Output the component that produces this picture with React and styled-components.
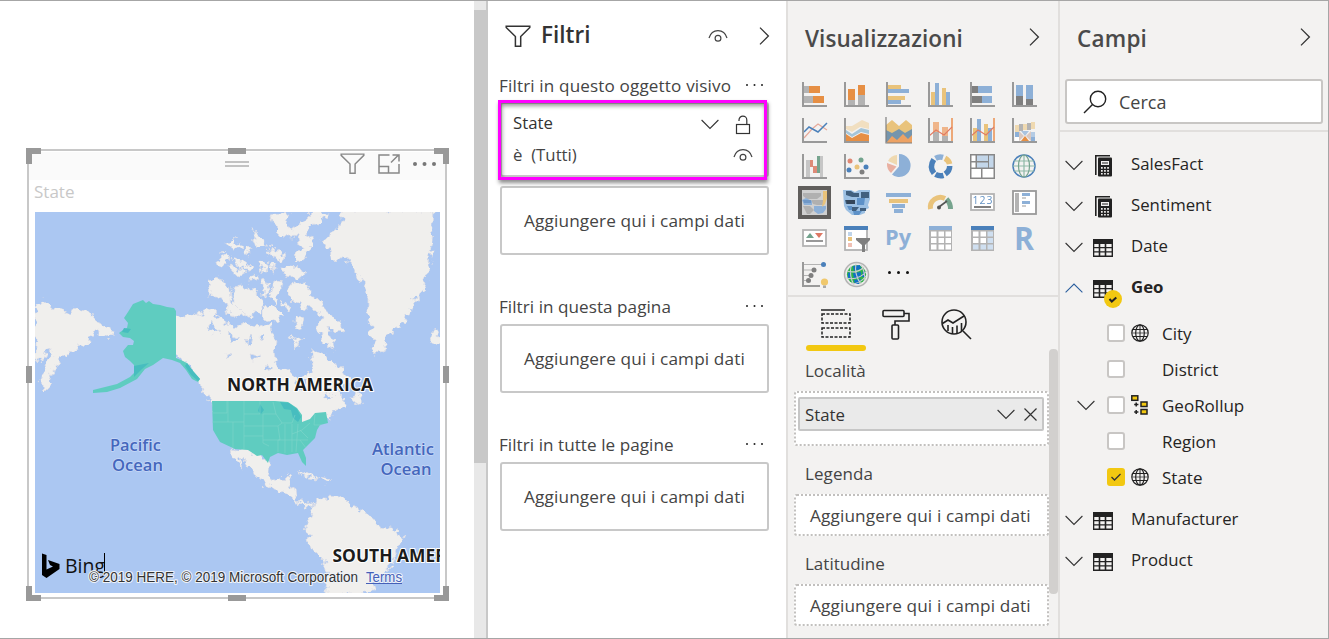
import React from 'react';
import styled, { createGlobalStyle } from 'styled-components';

const Global = createGlobalStyle`
  * { box-sizing: border-box; }
  body { margin: 0; background: #fff; font-family: "Open Sans", "Noto Sans", sans-serif; font-size: 16.8px; color: #333; }
  svg { display: block; flex: none; }
`;

const Shell = styled.div`
  display: flex;
  width: 1329px;
  height: 639px;
  border: 1px solid #a6a6a6;
  border-left: 0;
  overflow: hidden;
`;

const Label = styled.span`
  display: block;
  white-space: nowrap;
  line-height: 24px;
  font-size: ${p => p.$size || 16.8}px;
  font-weight: ${p => p.$weight || 400};
  letter-spacing: ${p => p.$track || 0}px;
  color: ${p => p.$color || '#444'};
`;

/* ---------- report canvas ---------- */
const Canvas = styled.main`
  width: 474px;
  padding: 147px 0 0 26px;
`;
const Visual = styled.section`
  position: relative;
  width: 423px;
  height: 453px;
  padding: 4px 4px 0 3px;
`;
const Outline = styled.div`
  position: absolute;
  inset: 1px 2px 2px 1px;
  border: 2px solid #c8c8c8;
  pointer-events: none;
`;
const Handle = styled.i`
  position: absolute;
  background: #999;
  ${p => p.$css}
`;
const VisualHeader = styled.header`
  display: flex;
  align-items: center;
  justify-content: flex-end;
  gap: 13px;
  height: 28px;
  padding: 0 9px 4px 0;
  background: #fafafa;
`;
const Grip = styled.div`
  width: 24px;
  height: 6px;
  margin: 0 78px 0 0;
  border: solid #c2c2c2;
  border-width: 2px 0;
`;
const VisualTitle = styled.div`
  padding: 0 0 8px 5px;
  height: 32px;
`;
const MapBox = styled.div`
  margin-left: 6px;
  width: 405px;
  height: 381px;
`;
const CanvasScroll = styled.div`
  width: 14px;
  padding-top: 9px;
  background: #e8e8e8;
  border-right: 2px solid #c8c8c8;
`;
const CanvasThumb = styled.div`
  height: 453px;
  background: #c8c8c8;
`;

/* ---------- filters ---------- */
const FilterPane = styled.aside`
  width: 298px;
  padding: 0 17px 0 12px;
`;
const FilterHead = styled.header`
  display: flex;
  align-items: center;
  height: 70px;
  margin-right: -1px;
  padding: 0 0 0 5px;
`;
const FilterTitle = styled.div`
  flex: 1;
  padding: 0 0 3px 10px;
`;
const FilterSection = styled.section`
  margin-bottom: 37px;
`;
const SectionHead = styled.div`
  display: flex;
  align-items: center;
  justify-content: space-between;
  height: 30px;
  margin: 0 0 ${p => p.$gap}px -1px;
  padding-right: 6px;
  & > svg { margin-bottom: 3px; }
`;
const DropBox = styled.div`
  display: flex;
  align-items: center;
  justify-content: center;
  height: 69px;
  border: 2px solid #c8c8c8;
  border-radius: 3px;
`;
const FilterCard = styled.div`
  position: relative;
  height: 75px;
  margin-bottom: 9px;
  padding: 7px 16px 0 11px;
  border: 2px solid #c8c8c8;
  border-radius: 3px;
`;
const CardRow = styled.div`
  display: flex;
  align-items: center;
  height: 34px;
  margin-right: -2px;
  & > span { flex: 1; }
`;
const CardTop = styled(CardRow)`
  height: 30px;
  margin: -3px 0 0;
  gap: 16px;
  & > svg { margin-top: 3px; }
`;
const Highlight = styled.div`
  position: absolute;
  left: -4px;
  top: -4px;
  width: 269px;
  height: 80px;
  border: 3px solid #ff00ff;
  box-shadow: 1px 3px 4px rgba(0, 0, 0, .45), inset 1px 3px 4px rgba(0, 0, 0, .4);
  pointer-events: none;
`;

/* ---------- visualizations ---------- */
const VizPane = styled.aside`
  width: 272px;
  background: #f3f2f1;
  border-left: 2px solid #e1dfdd;
`;
const PaneHead = styled.header`
  display: flex;
  align-items: center;
  justify-content: space-between;
  height: 72px;
  padding: 0 ${p => p.$right || 18}px 0 17px;
  & > span { padding-top: 3px; }
`;
const Gallery = styled.div`
  display: grid;
  grid-template-columns: repeat(6, 42px);
  grid-auto-rows: 36px;
  height: 224px;
  padding: 3px 0 0 6px;
  border-bottom: 2px solid #e1dfdd;
`;
const Cell = styled.div`
  display: flex;
  align-items: center;
  justify-content: center;
  width: 33px;
  height: 33px;
  margin: 1.5px 4px;
  ${p => p.$on && 'border: 4px solid #605e5c; background: #d0d0d0;'}
`;
const MoreCell = styled(Cell)`
  padding-bottom: 4px;
`;
const VizTabs = styled.div`
  display: flex;
  height: 54px;
  padding-left: 18px;
`;
const VizTab = styled.div`
  display: flex;
  justify-content: center;
  width: 60px;
  padding-top: 12px;
  position: relative;
  &::after {
    content: '';
    position: absolute;
    left: 0; right: 0; bottom: 0;
    height: 6px;
    border-radius: 3px;
    background: ${p => (p.$on ? '#f2c811' : 'transparent')};
  }
`;
const WellScroll = styled.div`
  display: flex;
  height: 286px;
`;
const Wells = styled.div`
  width: 261px;
  padding-left: 6px;
`;
const WellName = styled.div`
  height: ${p => p.$h}px;
  padding: ${p => p.$top}px 0 0 11px;
`;
const Well = styled.div`
  width: 255px;
  height: ${p => p.$h}px;
  padding: ${p => (p.$filled ? '4px 3px 4px 2px' : '8px 14px')};
  border: 2px dotted #c2c0be;
  border-radius: 3px;
  background: #fff;
`;
const Chip = styled.div`
  display: flex;
  align-items: center;
  height: 34px;
  padding: 1px 5px 0;
  gap: 9px;
  border: 2px solid #c6c6c6;
  border-radius: 2px;
  background: #eaeaea;
  & > span { flex: 1; }
`;
const WellThumb = styled.div`
  width: 9px;
  height: 245px;
  margin-top: -2px;
  border-radius: 4px;
  background: #d2d0ce;
`;

/* ---------- fields ---------- */
const FieldsPane = styled.aside`
  width: 270px;
  background: #f3f2f1;
  border-left: 2px solid #e1dfdd;
`;
const SearchArea = styled.div`
  height: 59px;
  padding: 6px 5px 0;
  border-bottom: 2px solid #e1dfdd;
`;
const SearchBox = styled.div`
  display: flex;
  align-items: center;
  gap: 12px;
  height: 45px;
  padding: 0 0 0 16px;
  border: 2px solid #c8c6c4;
  border-radius: 3px;
  background: #fff;
`;
const Tree = styled.div`
  padding: 11px 0 0 5px;
`;
const TableRow = styled.div`
  display: flex;
  align-items: center;
  height: 41px;
  & > svg { margin-top: 3px; }
`;
const IconSlot = styled.div`
  position: relative;
  width: 38px;
  margin: 4px 0 0 10px;
`;
const Badge = styled.div`
  position: absolute;
  left: 11px;
  top: 10px;
`;
const Children = styled.div`
  padding: 9px 0 2px;
`;
const FieldRow = styled.div`
  display: flex;
  align-items: center;
  height: 36px;
  padding-left: 12px;
`;
const Slot = styled.div`
  width: ${p => p.$w}px;
  & > svg { margin-bottom: 2px; }
`;
const Check = styled.div`
  width: 18px;
  height: 18px;
  margin-bottom: 2px;
  border: 2px solid ${p => (p.$on ? '#f2c811' : '#c8c6c4')};
  border-radius: 3px;
  background: ${p => (p.$on ? '#f2c811' : '#fff')};
`;

/* ---------- small glyphs ---------- */
const Chevron = ({ dir = 'down', w = 18, color = '#333' }) => {
  const d = { down: 'M.6 1 9 9.4 17.4 1', up: 'M.6 9.4 9 1l8.400 8.400', right: 'M1 .6 9.400 9 1 17.400' }[dir];
  const side = dir === 'right';
  return (
    <svg width={side ? 11 : w} height={side ? 18 : 11} viewBox={side ? '0 0 11 18' : '0 0 18 11'} fill="none" stroke={color} strokeWidth={side ? 1.3 : 1.1}><path d={d} /></svg>
  );
};
const Eye = () => (
  <svg width="20" height="14" viewBox="0 0 20 14" fill="none" stroke="#444" strokeWidth="1.2">
    <path d="M1 9C2.500 4 6 1.600 10 1.600S17.500 4 19 9" /><circle cx="10" cy="9.200" r="2.900" />
  </svg>
);
const Lock = () => (
  <svg width="16" height="20" viewBox="0 0 16 20" fill="none" stroke="#333" strokeWidth="1.200">
    <rect x="1.500" y="9.500" width="13" height="9" /><path d="M4 6V5a3.900 3.900 0 0 1 7.800 0v4.500" />
  </svg>
);
const Funnel = ({ color = '#333', w = 26, sw = 1.5 }) => (
  <svg width={w} height={w * 24 / 26} viewBox="0 0 26 24" fill="none" stroke={color} strokeWidth={sw}>
    <path d="M1.200 2.200h23.600v1.300L15.700 12.500v9.700h-5.300v-9.700L1.200 3.500z" />
  </svg>
);
const Dots = ({ color = '#333', r = 1, gap = 7 }) => (
  <svg width={gap * 2 + r * 2} height={r * 2} fill={color}>
    {[0, 1, 2].map(i => <circle key={i} cx={r + i * gap} cy={r} r={r} />)}
  </svg>
);
const Globe = () => (
  <svg width="18" height="18" viewBox="0 0 18 18" fill="none" stroke="#222" strokeWidth="1.200">
    <circle cx="9" cy="9" r="8.200" /><ellipse cx="9" cy="9" rx="4.300" ry="8.200" /><path d="M9 1v16M2 5.500h14M2 12.500h14" strokeWidth="1" /><path d="M1 9h16" strokeWidth=".7" />
  </svg>
);
const TableIcon = () => (
  <svg width="20" height="18" viewBox="0 0 20 18">
    <path fill="#222" d="M0 0h20v18H0z" />
    <path fill="#f3f2f1" d="M1.300 5h4.400v3H1.300zM7.300 5h4.400v3H7.300zM13.300 5h5.300v3h-5.300zM1.300 9.300h4.400v3H1.300zM7.300 9.300h4.400v3H7.300zM13.300 9.300h5.300v3h-5.300zM1.300 13.600h4.400v3H1.300zM7.300 13.600h4.400v3H7.300zM13.300 13.600h5.300v3h-5.300z" />
  </svg>
);
const CalcIcon = () => (
  <svg width="20" height="22" viewBox="0 0 20 22">
    <path d="M17 .8H2.800V20" fill="none" stroke="#222" strokeWidth="1.600" />
    <path fill="#222" d="M6 2.500h12q1 0 1 1v17q0 1-1 1H6q-1 0-1-1v-17q0-1 1-1z" />
    <path fill="#f3f2f1" d="M8 6h8v4H8zM8 12h1.700v1.700H8zM11.100 12h1.700v1.700h-1.700zM14.200 12h1.700v1.700h-1.700zM8 15h1.700v1.700H8zM11.100 15h1.700v1.700h-1.700zM14.200 15h1.700v1.700h-1.700zM8 18h1.700v1.500H8zM11.100 18h1.700v1.500h-1.700zM14.200 18h1.700v1.500h-1.700z" />
    <path fill="#222" d="M9 7.500h6v1H9z" />
  </svg>
);
const Hierarchy = () => (
  <svg width="18" height="20" viewBox="0 0 18 20" fill="#f2c811" stroke="#222" strokeWidth="1.500">
    <rect x=".8" y=".8" width="6" height="4.500" /><rect x="10" y="7" width="6" height="4.500" /><rect x="10" y="14.500" width="6" height="4.500" />
    <path d="M5.200 7.500v4M3.200 9.500h4.200M5.200 15v4M3.200 17h4.200" fill="none" />
  </svg>
);
const Tick = () => <svg width="14" height="14" viewBox="0 0 14 14" fill="none" stroke="#333" strokeWidth="1.300"><path d="m2.500 7 3 3 6-6" /></svg>;

/* ---------- visual gallery icons, 25 x 25 ---------- */
const O = '#e68f44', B = '#8db0d7', DB = '#4a80ba', Y = '#e9c37b', G = '#b3b3b3', K = '#7f7f7f', AX = '#999';
const R = (x, y, w, h, f) => <rect key={`${x}-${y}-${f}`} x={x} y={y} width={w} height={h} fill={f} />;
const Axis = () => <path d="M1 0v24h24" fill="none" stroke={AX} strokeWidth="2" />;
const Line = ({ d, c, w = 1.2, f = 'none' }) => <path d={d} fill={f} stroke={c} strokeWidth={w} />;

const gallery = [
  <>{R(2, 4, 5, 7, G)}{R(7, 4, 11, 7, O)}{R(2, 14, 9, 7, G)}{R(11, 14, 11, 7, O)}<Axis /></>,
  <>{R(4, 7, 7, 11, O)}{R(4, 18, 7, 5, G)}{R(14, 3, 7, 10, O)}{R(14, 13, 7, 10, G)}<Axis /></>,
  <>{R(2, 3, 13, 4, Y)}{R(2, 7, 21, 4, B)}{R(2, 14, 17, 4, Y)}{R(2, 18, 13, 4, B)}<Axis /></>,
  <>{R(3, 10, 4, 13, Y)}{R(7, 1, 4, 22, B)}{R(14, 6, 4, 17, Y)}{R(18, 10, 4, 13, B)}<Axis /></>,
  <>{R(2, 4, 6, 7, K)}{R(8, 4, 14, 7, B)}{R(2, 14, 10, 7, K)}{R(12, 14, 10, 7, B)}<Axis /></>,
  <>{R(4, 3, 7, 11, B)}{R(4, 14, 7, 9, K)}{R(14, 3, 7, 14, B)}{R(14, 17, 7, 6, K)}<Axis /></>,
  <><Line d="m2 20 8-9 6-5 9 6" c="#e6a99a" /><Line d="m2 14 5-5 9 5 9-9" c={DB} w={1.500} /><Axis /></>,
  <><path d="m2 8 6 0L18 2l7 3v6l-9-2-8 5-6-3z" fill="#f1dfc0" /><path d="m2 12 6 4 9-6 8 2v4l-8-2-9 5-6-4z" fill="#a5c5d8" /><path d="m2 16 6 4 9-5 8 2v6H2z" fill={O} /><Axis /></>,
  <><path d="m0 7 6-5 7 6 7-6 6 5v10H0z" fill={Y} /><path d="m0 12 6 3 7-4 6 4 7-4v13H0z" fill="#7495ad" /><path d="m1 24 5-6 5 4 6-6 5 5 4-4v8H1z" fill="#eda263" /><path d="M0-1v26h26" fill="none" stroke={K} strokeWidth="1.200" /></>,
  <>{R(5, 4, 6, 10, '#efb58a')}{R(5, 14, 6, 9, G)}{R(14, 9, 6, 9, '#efb58a')}{R(14, 18, 6, 5, G)}{R(23, 0, 2, 23, '#eda878')}<Line d="m1 18 7-6 8 5 8-8" c="#e27b63" w={1.100} /><Axis /></>,
  <>{R(3, 10, 4, 13, Y)}{R(7, 1, 4, 22, B)}{R(14, 6, 4, 17, Y)}{R(18, 10, 4, 13, B)}{R(23, 0, 2, 23, '#eda878')}<Line d="m1 18 7-6 8 5 8-8" c="#e27b63" w={1.100} /><Axis /></>,
  <>{R(3, 7, 4, 7, '#efd9b0')}{R(7, 6, 4, 7, G)}{R(11, 6, 4, 6, '#efd9b0')}{R(15, 5, 4, 7, G)}{R(19, 4, 4, 7, '#efd9b0')}{R(3, 14, 4, 5, B)}{R(19, 14, 4, 5, '#b4cbe4')}<path d="m7 13 5 5-5 5zM19 13l-5 5 5 5z" fill="#d9c8c0" /><path d="M9 13h8l-4 5z" fill="#a9c3df" /><path d="m9 23 4-5 4 5z" fill={O} />{R(3, 19, 4, 4, '#fff')}{R(19, 19, 4, 4, B)}<Axis /></>,
  <>{R(4, 6, 4, 17, '#c6c6c6')}{R(8, 6, 3, 7, '#dd8b78')}{R(11, 12, 4, 7, '#dd8b78')}{R(15, 2, 3, 17, '#76a48e')}{R(18, 2, 3, 21, '#c6c6c6')}<Axis /></>,
  <><circle cx="6" cy="7" r="2.500" fill="#e08873" /><circle cx="17" cy="6" r="2.500" fill="#72a38d" /><circle cx="5" cy="16" r="2.500" fill={DB} /><circle cx="13" cy="13" r="2.500" fill={Y} /><circle cx="22" cy="13" r="2.500" fill={DB} /><circle cx="18" cy="18" r="2.500" fill={K} /><Axis /></>,
  <><path d="M13 0a11.500 11.500 0 1 1-7 20.500l7-8z" fill={B} /><path d="M11 1v10L2 7A11 11 0 0 1 11 1z" fill="#efd9b0" /><path d="m1 9 9.500 3.500L5 19A12 12 0 0 1 1 9z" fill="#e9b0a1" /></>,
  <g fill="none" strokeWidth="5.500"><path d="M7.500 4.300a9.500 9.500 0 0 1 7.500-.9" stroke={B} /><path d="M17 4.300q3.800 2 4.600 5.700" stroke={Y} /><path d="M21.700 12q0 5-4.500 8" stroke={DB} /><path d="M15.500 21.300q-4 1.200-8-1" stroke={DB} /><path d="M6 19.300Q1 13 5.800 5.500" stroke={DB} /></g>,
  <>{R(0, 0, 25, 25, '#888')}{R(1.500, 1.500, 4, 5.500, '#fff')}{R(7, 1.500, 11, 5.500, '#c3d6e9')}{R(19, 1.500, 4.500, 12, '#c3d6e9')}{R(1.500, 8.500, 4, 5, '#fff')}{R(7, 8.500, 11, 5, '#c3d6e9')}{R(1.500, 15, 9.500, 8.500, '#fff')}{R(12.500, 15, 11, 8.500, '#fff')}</>,
  <g fill="none" strokeWidth="1.200"><circle cx="12" cy="12" r="11" stroke={DB} strokeWidth="1.500" /><path d="M12 1v22M2 7h20M1 12h22M2 17h20" stroke="#8fb9a7" /><ellipse cx="12" cy="12" rx="5.500" ry="11" stroke="#76a48e" /></g>,
  <>{R(0, 0, 25, 25, '#d0d0d0')}<path d="M1 3h18v3l-4 3H5L1 6zM9 10h12v5h-6l-4-1zM1 16h7l4 4-4 4H5z" fill="#b0b0b0" /><path d="m0 10 4-2 6 3v4H2zM12 16h12v3l-3 4-5 1-4-3z" fill={B} /><path d="M1 10h8v3H2z" fill="#6f97c6" /><path d="M21 1h4v7l-2 6-3 3 1-6z" fill={Y} /></>,
  <><path d="M-1 0h8l4 2 4-2h11v9l-2 6 1 3-4 2v3l-5 2H8l-6-5-2-4z" fill="#9cc0e3" /><path d="M2 1h5l3 2h5v4H8L2 5zM17 2h8v6h-5l-3 2zM1 10h10v4H2zM16 18h6v3h-6zM8 17h7l-3 4H8z" fill="#41607f" /><path d="M2 10h9v4H3z" fill="#34465a" /><path d="M13 8h8l-1 7h-7zM3 16h5v4H5zM9 21h9l-3 4H10z" fill="#5d91c8" /></>,
  <>{R(0, 3, 25, 4, B)}{R(3, 9, 19, 4, Y)}{R(6, 14, 13, 4, B)}{R(8, 19, 9, 4, B)}</>,
  <g fill="none" strokeWidth="5"><path d="M2.500 19A10 10 0 0 1 17 8.500" stroke={Y} /><path d="M18.500 9q4 4 4 10" stroke="#76a48e" /><path d="M11 17 19 11" stroke="#555" strokeWidth="1.600" /><circle cx="11" cy="17.500" r="1" stroke="#555" strokeWidth="2" /></g>,
  <><rect x="1" y="4" width="23" height="16" fill="#fff" stroke={G} strokeWidth="1.800" /><text x="2.500" y="13.500" fontSize="10.500" textLength="20" fill={DB} opacity=".85">123</text>{R(4, 16, 17, 2, K)}</>,
  <><rect x="1" y="1" width="23" height="23" fill="#fff" stroke={AX} strokeWidth="1.800" />{R(3, 3, 4, 19, G)}{R(10, 3, 8, 3, B)}{R(10, 7, 4, 2, '#ccc')}{R(10, 11, 8, 3, B)}{R(10, 15, 4, 2, '#ccc')}</>,
  <><rect x="1" y="4" width="23" height="16" fill="#fff" stroke={G} strokeWidth="1.800" /><path d="m4 12 4-5 4 5z" fill="#72a38d" /><path d="m13 7 8 0-4 5z" fill="#dd7864" />{R(4, 14, 17, 2, AX)}</>,
  <><rect x="1" y="1" width="22" height="23" fill="#fff" stroke={G} strokeWidth="1.800" />{R(0, 0, 24, 4, DB)}{R(4, 6, 4, 4, '#bfd4ea')}{R(4, 11, 4, 4, Y)}{R(4, 17, 4, 4, '#f0c0b4')}<path d="M12 12h14v2l-5 5v7h-3v-7l-6-5z" fill={K} /></>,
  <text x="-1" y="18.500" fontSize="22" fontWeight="700" textLength="26" lengthAdjust="spacingAndGlyphs" fill={B}>Py</text>,
  <>{R(1, 0, 23, 25, G)}{R(1, 0, 23, 4, B)}{[3, 10.500, 17.500].map(x => [5.500, 12, 18.500].map(y => R(x, y, 5.500, 5, '#fff')))}</>,
  <>{R(1, 0, 23, 25, G)}{R(1, 0, 23, 4, DB)}{[3, 10.500, 17.500].map((x, i) => [5.500, 12, 18.500].map((y, j) => R(x, y, 5.500, 5, i === 2 || j === 2 ? '#cfdff0' : '#fff')))}</>,
  <text x="2" y="24" fontSize="33" fontWeight="700" textLength="20" lengthAdjust="spacingAndGlyphs" fill={B}>R</text>,
  <><path d="M2 2.500h19M2 8h10M2 13.500h7M2 18.500h5" stroke={G} strokeWidth="1.200" /><circle cx="21.500" cy="2.500" r="2.500" fill={DB} /><circle cx="12" cy="8" r="2.500" fill={K} /><circle cx="9" cy="13.500" r="2.500" fill={K} /><circle cx="6.500" cy="18.500" r="2.500" fill={K} /><path d="M1 0v24h17" fill="none" stroke={AX} strokeWidth="2" /><circle cx="22.500" cy="20" r="3.600" fill="#f0c86c" />{R(21, 23.500, 3, 2.500, '#aaa')}</>,
  <><circle cx="12.500" cy="12.500" r="12" fill="#ecebea" stroke={G} strokeWidth="1.500" /><circle cx="12.500" cy="12.500" r="9.600" fill="#2db34a" /><path d="M9 4l7-1 1 4-7 2zM9 11l8-1v5l-7 2zM4 11l3-1v6l-3 1zM10 18l7-1-2 5h-4zM19 8l2 2v5h-3z" fill="#1070c4" /><g fill="none" stroke="#cfcfcf" strokeWidth="1.100"><path d="M3 9q10 3 17-4M2 16q12 3 21-7M7 22q9 0 15-8M7 4q-2 10 3 19M12 1q-2 12 5 21M17 2q4 8 4 17" /></g></>,
];
const Gal = ({ children }) => <svg width="25" height="25" viewBox="0 0 25 25" overflow="visible">{children}</svg>;

/* ---------- map ---------- */
const land = [
  '35,304 45,302 50,305 53,309 62,311 70,314 73,309 82,311 90,313 95,320 104,326 113,331 110,338 104,336 98,331 95,333 89,338 88,344 76,349 65,357 58,360 54,372 48,386 42,392 40,382 42,372 50,358 52,350 47,352 42,358 35,363',
  '160,317 188,317 200,314 210,310 216,316 228,324 238,326 246,322 256,328 267,324 272,331 275,340 274,350 275,360 281,368 291,372 297,382 302,392 306,390 303,378 310,372 312,362 310,351 318,350 327,356 334,364 340,368 345,374 352,380 344,386 338,392 343,397 346,407 339,411 331,411 332,417 327,416 320,420 305,425 280,430 216,410 205,396 199,382 191,368 176,356 160,350',
  '230,447 248,449 257,455 262,454 269,461 268,472 272,481 281,482 288,475 291,477 287,484 296,490 298,500 305,503 314,501 313,506 303,506 292,496 281,491 266,485 257,477 250,467 241,455 239,457 243,466 237,462 231,453',
  '315,502 325,497 342,498 352,505 367,513 372,522 382,527 398,530 402,536 398,546 395,556 391,568 382,576 374,584 368,594 326,594 327,570 323,560 315,552 305,532 307,525 311,517',
  '342,210 342,222 337,230 323,240 330,250 332,259 345,260 355,268 363,283 368,297 368,310 370,327 374,352 383,353 388,333 405,323 412,303 423,290 428,273 432,240 434,210',
  '429,333 438,331 440,341 433,343',
  '212,278 223,280 230,290 232,304 244,308 250,314 240,318 228,314 226,302 217,296 210,296',
  '232,288 248,286 262,298 262,314 244,314 234,304', '217,262 225,252 232,258 224,264 218,266', '228,244 236,236 240,248 232,250', '230,264 238,270 246,272 238,277 231,271',
  '271,214 290,212 286,226 292,230 304,220 312,212 328,212 322,222 310,226 308,236 314,240 304,250 308,258 300,262 292,256 300,248 298,238 284,236 274,226',
  '252,230 260,236 266,248 258,246', '268,246 278,252 288,256 280,260 268,254', '258,260 268,262 266,270 259,268', '280,266 300,268 306,272 302,278 286,276', '234,258 246,262 252,268 240,270',
  '262,282 270,284 268,296 262,292', '274,280 282,282 280,294 274,306 271,296',
  '246,246 251,250 248,256 243,252', '250,276 258,274 256,281 249,281', '270,268 277,264 275,272', '264,306 276,308 284,316 276,322 264,318', '282,302 290,306 288,312',
  '288,284 304,282 312,296 322,302 326,312 338,320 344,330 336,332 328,324 332,340 336,350 328,346 320,338 318,328 322,318 314,308 302,306 294,302 288,296',
  '294,316 304,320 301,330 294,326', '290,336 302,340 298,346', '350,397 358,394 363,402 355,405', '297,471 309,473 317,478 308,477', '320,478 331,480 325,483',
];
const us = '212,401 275,401 288,402 297,408 302,415 302,422 310,419 315,413 326,412 328,423 320,425 317,430 315,438 303,450 306,458 306,466 302,462 298,453 287,455 278,453 270,457 268,463 262,455 257,456 248,450 235,449 220,442 213,430';
const alaska = '124,318 128,312 133,304 143,300 146,303 149,301 153,304 160,305 167,307 174,308 176,311 176,358 181,360 187,363 193,371 200,379 198,382 192,379 186,370 180,363 172,360 163,358 153,365 145,369 137,379 120,388 107,392 93,393 93,390 117,384 130,377 134,373 134,365 130,361 125,357 123,351 128,345 133,345 134,341 130,338 123,337 119,333 123,330 127,328 128,323';

const WorldMap = () => (
  <svg width="405" height="381" viewBox="35 212 405 381">
    <defs>
      <filter id="coast" x="-10%" y="-10%" width="120%" height="120%">
        <feTurbulence type="fractalNoise" baseFrequency=".13" numOctaves="3" seed="4" result="n" />
        <feDisplacementMap in="SourceGraphic" in2="n" scale="13" xChannelSelector="R" yChannelSelector="G" />
      </filter>
    </defs>
    <path fill="#abc7f2" d="M35 212h405v381H35z" />
    <g filter="url(#coast)" fill="#f0efed" stroke="#dcdde6" strokeWidth=".8">{land.map(p => <polygon key={p} points={p} />)}
      <g fill="#abc7f2"><path d="M212 324l8 4-6 5-6-4zM229 334l10 5-7 4zM248 336l5 7-6 3zM262 332l4 6-6 2zM224 352l8 2-5 3zM252 354l9 3-8 3zM266 364l6 5-7 2zM325 392l9 3-8 4z" /></g>
    </g>
    <polygon points={alaska} fill="#5fccc0" />
    <polygon points={us} fill="#5fccc0" />
    <path d="M280 402l9 1 8 6 4 8-3 5-5-4-2-8-7-1zM124 328l7 1-3 4-6-1zM134 366l15-3-7 6-8 8zM187 363l6 8 7 8-2 2-7-6-6-9zM260 404l4 6-3 4-3-3z" fill="#47bdbf" />
    <g fill="none" stroke="#84d6cc" strokeWidth=".7">
      <path d="M228 401v21M212 422h32M244 401v48M212 413h15l0-12M260 401v13h-16M244 426h34M263 414v22h-19M233 422v27M273 402l3 12h-13M276 414l6 9-4 3 2 14h-17M282 423h10l3-8M285 424v29M292 424v28M298 424l-2 28M278 440h30M292 434l10-4 8-7M300 440l6 8M308 438l-8-8M263 436v7l6 3M278 440v12M315 414l-1 11h7" opacity=".75" />
    </g>
    <g fontWeight="700" fontSize="17" fill="#1b1b1b" stroke="#fff" strokeWidth="2" paintOrder="stroke" strokeLinejoin="round">
      <text x="227" y="391" textLength="146" lengthAdjust="spacingAndGlyphs">NORTH AMERICA</text>
      <text x="332.500" y="562" textLength="143" lengthAdjust="spacingAndGlyphs">SOUTH AMERICA</text>
    </g>
    <g fontSize="17" fontWeight="600" fill="#4467bd" stroke="#c9d9f6" strokeWidth="1.500" paintOrder="stroke" strokeLinejoin="round">
      <text x="110" y="451" textLength="51" lengthAdjust="spacingAndGlyphs">Pacific</text>
      <text x="112" y="471" textLength="51" lengthAdjust="spacingAndGlyphs">Ocean</text>
      <text x="372" y="455" textLength="62" lengthAdjust="spacingAndGlyphs">Atlantic</text>
      <text x="380.500" y="475" textLength="51" lengthAdjust="spacingAndGlyphs">Ocean</text>
    </g>
    <path d="M42 553.500l4.500 1.500v14.500l6.500-3-3-1.500-2-5 11.500 4v5L46.500 578 42 575z" fill="#000" />
    <text x="65" y="573" fontSize="20" textLength="40" lengthAdjust="spacingAndGlyphs" fill="#111">Bing</text>
    <path d="M104.500 553v22" stroke="#000" />
    <g fontFamily="Liberation Sans, sans-serif" fontSize="14" stroke="#eef2f8" strokeWidth="2.200" paintOrder="stroke" strokeLinejoin="round">
      <text x="89" y="582" textLength="269" lengthAdjust="spacingAndGlyphs" fill="#333">© 2019 HERE, © 2019 Microsoft Corporation</text>
      <text x="366" y="582" textLength="36" lengthAdjust="spacingAndGlyphs" fill="#4560b8">Terms</text>
    </g>
    <path d="M366 583.500h36" stroke="#4560b8" />
  </svg>
);

const handles = [
  'left:0;top:0;width:15px;height:6px;', 'left:0;top:0;width:6px;height:16px;',
  'right:0;top:0;width:15px;height:6px;', 'right:0;top:0;width:6px;height:16px;',
  'left:0;bottom:0;width:15px;height:6px;', 'left:0;bottom:0;width:6px;height:15px;',
  'right:0;bottom:0;width:15px;height:6px;', 'right:0;bottom:0;width:6px;height:15px;',
  'left:202px;top:0;width:18px;height:6px;', 'left:202px;bottom:0;width:18px;height:6px;',
  'left:0;top:218px;width:6px;height:17px;', 'right:0;top:218px;width:6px;height:17px;',
];

const Placeholder = () => <Label $size={17.2} $track={0.13}>Aggiungere qui i campi dati</Label>;

const Section = ({ title, gap = 2, track = 0.05, children }) => (
  <FilterSection>
    <SectionHead $gap={gap}><Label $size={17.1} $track={track}>{title}</Label><Dots gap={7.500} r={1} color="#222" /></SectionHead>
    {children}
    <DropBox><Placeholder /></DropBox>
  </FilterSection>
);

const Table = ({ name, icon, open }) => (
  <TableRow>
    <Chevron dir={open ? 'up' : 'down'} color={open ? '#2b5f9e' : '#333'} />
    <IconSlot>
      {icon === 'calc' ? <CalcIcon /> : <TableIcon />}
      {open && <Badge><svg width="18" height="18" viewBox="0 0 18 18"><circle cx="9" cy="9" r="9" fill="#f2c811" /><path d="m5.500 9 2.300 2.500 4.500-4" fill="none" stroke="#222" strokeWidth="2" /></svg></Badge>}
    </IconSlot>
    <Label $color="#252423" $weight={open ? 700 : 400}>{name}</Label>
  </TableRow>
);

const Field = ({ name, icon, expandable, checked }) => (
  <FieldRow>
    <Slot $w={30}>{expandable && <Chevron />}</Slot>
    <Check $on={checked}>{checked && <Tick />}</Check>
    <Slot $w={6} />
    <Slot $w={31}>{icon}</Slot>
    <Label $color="#252423" $size={17}>{name}</Label>
  </FieldRow>
);

export default function App() {
  return (
    <>
      <Global />
      <Shell>
        <Canvas>
          <Visual>
            <VisualHeader>
              <Grip />
              <Funnel color="#888" w={25} />
              <svg width="22" height="20" viewBox="0 0 22 20" fill="none" stroke="#888" strokeWidth="1.500"><path d="M11.500 1H1v18h20V10M1 12.500h9.500V19M13 8.500 20.500 1M14.500 1H21v6.500" /></svg>
              <Dots color="#777" r={2} gap={9.5} />
            </VisualHeader>
            <VisualTitle><Label $color="#c8c8c8" $size={17}>State</Label></VisualTitle>
            <MapBox><WorldMap /></MapBox>
            <Outline />
            {handles.map(h => <Handle key={h} $css={h} />)}
          </Visual>
        </Canvas>
        <CanvasScroll><CanvasThumb /></CanvasScroll>

        <FilterPane>
          <FilterHead>
            <Funnel />
            <FilterTitle><Label $size={22.5} $weight={600} $color="#333">Filtri</Label></FilterTitle>
            <Eye />
            <Slot $w={31} />
            <Chevron dir="right" />
          </FilterHead>
          <Section title="Filtri in questo oggetto visivo" gap={1} track={0.15}>
            <FilterCard>
              <CardTop><Label $color="#333">State</Label><Chevron /><Lock /></CardTop>
              <CardRow><Label>è&nbsp; (Tutti)</Label><Eye /></CardRow>
              <Highlight />
            </FilterCard>
          </Section>
          <Section title="Filtri in questa pagina" />
          <Section title="Filtri in tutte le pagine" />
        </FilterPane>

        <VizPane>
          <PaneHead><Label $size={22.5} $weight={600} $track={0.05} $color="#4a4a4a">Visualizzazioni</Label><Chevron dir="right" /></PaneHead>
          <Gallery>
            {gallery.map((g, i) => <Cell key={i} $on={i === 18}><Gal>{g}</Gal></Cell>)}
            <MoreCell><Dots r={1.500} gap={9} color="#111" /></MoreCell>
          </Gallery>
          <VizTabs>
            <VizTab $on>
              <svg width="30" height="30" viewBox="0 0 30 30" fill="none" stroke="#222" strokeWidth="1.500"><path d="M0 1h24" /><g strokeDasharray="3 1.500"><rect x="1" y="5" width="28" height="9" /><rect x="1" y="19" width="28" height="9" /></g></svg>
            </VizTab>
            <VizTab>
              <svg width="30" height="31" viewBox="0 0 30 31" fill="none" stroke="#222" strokeWidth="1.600"><rect x="2" y="1.500" width="21" height="6" rx="1" /><path d="M23 4.500h5V12H14v4" /><rect x="11" y="16" width="6.500" height="14" rx="1" /></svg>
            </VizTab>
            <VizTab>
              <svg width="31" height="31" viewBox="0 0 31 31" fill="none" stroke="#222" strokeWidth="1.600"><circle cx="13" cy="13" r="12" /><path d="m22 22 8 8M1.500 14.500 7 11l5 3L23 7M7 16v6M11.500 18v7M16 16.500V25M20.500 14v8" /></svg>
            </VizTab>
          </VizTabs>
          <WellScroll>
            <Wells>
              <WellName $h={40} $top={8}><Label $size={17}>Località</Label></WellName>
              <Well $h={55} $filled><Chip><Label $color="#333">State</Label><Chevron /><svg width="13" height="13" stroke="#333" strokeWidth="1.200"><path d="m.5.5 12 12m0-12-12 12" /></svg></Chip></Well>
              <WellName $h={48} $top={16}><Label $size={17} $track={0.1}>Legenda</Label></WellName>
              <Well $h={42}><Placeholder /></Well>
              <WellName $h={48} $top={16}><Label $size={17}>Latitudine</Label></WellName>
              <Well $h={42}><Placeholder /></Well>
            </Wells>
            <WellThumb />
          </WellScroll>
        </VizPane>

        <FieldsPane>
          <PaneHead $right={17}><Label $size={22.5} $weight={600} $track={0.2} $color="#4a4a4a">Campi</Label><Chevron dir="right" /></PaneHead>
          <SearchArea>
            <SearchBox>
              <svg width="24" height="24" viewBox="0 0 24 24" fill="none" stroke="#222" strokeWidth="1.400"><circle cx="15" cy="9" r="7.700" /><path d="M9.500 14.500 1 23" /></svg>
              <Label $size={18}>Cerca</Label>
            </SearchBox>
          </SearchArea>
          <Tree>
            <Table name="SalesFact" icon="calc" />
            <Table name="Sentiment" icon="calc" />
            <Table name="Date" />
            <Table name="Geo" open />
            <Children>
              <Field name="City" icon={<Globe />} />
              <Field name="District" />
              <Field name="GeoRollup" icon={<Hierarchy />} expandable />
              <Field name="Region" />
              <Field name="State" icon={<Globe />} checked />
            </Children>
            <Table name="Manufacturer" />
            <Table name="Product" />
          </Tree>
        </FieldsPane>
      </Shell>
    </>
  );
}
